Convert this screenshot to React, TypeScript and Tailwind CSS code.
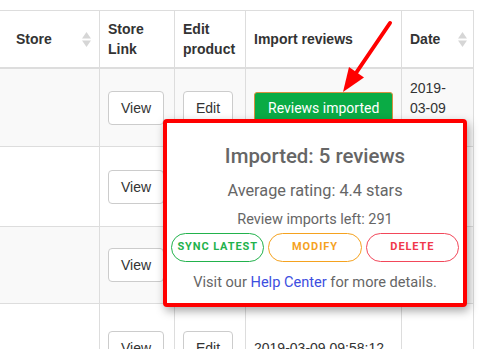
import React from "react";

const SortIcon = () => (
  <svg width="9" height="15" viewBox="0 0 9 15" className="shrink-0">
    <path d="M4.5 0 L9 6.5 L0 6.5 Z" fill="#d6d6d6" />
    <path d="M0 8.5 L9 8.5 L4.5 15 Z" fill="#d6d6d6" />
  </svg>
);

const TableButton = ({ label }: { label: string }) => (
  <div className="px-3 h-[34px] shrink-0 flex items-center rounded-[4px] border border-[#ccc] bg-white text-[14px] text-[#333]">
    {label}
  </div>
);

const Cell = ({
  children,
  className = "",
}: {
  children?: React.ReactNode;
  className?: string;
}) => (
  <div className={`flex items-center px-2 overflow-hidden ${className}`}>
    {children}
  </div>
);

const rows = [
  { h: "h-[77px]", bg: "bg-[#f9f9f9]", date: ["2019-", "03-09", "09:58:12"] },
  { h: "h-[79px]", bg: "bg-white", date: ["2019-", "03-09", "09:58:12"] },
  { h: "h-[76px]", bg: "bg-[#f9f9f9]", date: ["2019-", "03-09", "09:58:12"] },
];

const App = (): React.ReactElement => {
  return (
    <div
      className="relative w-[479px] h-[349px] overflow-hidden bg-white text-[#333]"
      style={{ fontFamily: '"Liberation Sans", Arial, sans-serif' }}
    >
      <div className="pt-[10px]">
        <div className="w-[474px] grid grid-cols-[7px_91px_74px_70px_155px_71px] gap-px bg-[#ddd] pt-px pr-px text-[14px] leading-[20px]">
          {/* header */}
          <Cell className="h-[57px] bg-white border-b border-[#ddd]" />
          <Cell className="h-[57px] bg-white border-b border-[#ddd] justify-between font-bold">
            <span>Store</span>
            <SortIcon />
          </Cell>
          <Cell className="h-[57px] bg-white border-b border-[#ddd] font-bold">
            <span>
              Store
              <br />
              Link
            </span>
          </Cell>
          <Cell className="h-[57px] bg-white border-b border-[#ddd] font-bold">
            <span>
              Edit
              <br />
              product
            </span>
          </Cell>
          <Cell className="h-[57px] bg-white border-b border-[#ddd] font-bold">
            <span>Import reviews</span>
          </Cell>
          <Cell className="h-[57px] bg-white border-b border-[#ddd] justify-between font-bold pr-[6px]">
            <span>Date</span>
            <SortIcon />
          </Cell>

          {rows.map((row, i) => (
            <React.Fragment key={i}>
              <Cell className={`${row.h} ${row.bg}`} />
              <Cell className={`${row.h} ${row.bg}`} />
              <Cell className={`${row.h} ${row.bg}`}>
                <TableButton label="View" />
              </Cell>
              <Cell className={`${row.h} ${row.bg}`}>
                <TableButton label="Edit" />
              </Cell>
              <Cell className={`${row.h} ${row.bg}`}>
                <div
                  className="px-[13px] h-[32px] shrink-0 whitespace-nowrap flex items-center rounded-[3px] border border-[#d9903f] bg-[#0aab45] text-white text-[14px]"
                  style={{ fontFamily: "Roboto, sans-serif" }}
                >
                  Reviews imported
                </div>
              </Cell>
              <Cell className={`${row.h} ${row.bg}`}>
                <span>
                  {row.date.map((d) => (
                    <React.Fragment key={d}>
                      {d}
                      <br />
                    </React.Fragment>
                  ))}
                </span>
              </Cell>
            </React.Fragment>
          ))}

          {/* last row */}
          <Cell className="h-[88px] bg-white" />
          <Cell className="h-[88px] bg-white" />
          <Cell className="h-[88px] bg-white">
            <TableButton label="View" />
          </Cell>
          <Cell className="h-[88px] bg-white">
            <TableButton label="Edit" />
          </Cell>
          <Cell className="h-[88px] bg-white whitespace-nowrap">
            <span>2019-03-09 09:58:12</span>
          </Cell>
          <Cell className="h-[88px] bg-white" />
        </div>
      </div>

      {/* red arrow annotation */}
      <svg
        className="absolute left-0 top-0 pointer-events-none"
        width="479"
        height="349"
        viewBox="0 0 479 349"
      >
        <line x1="390" y1="23" x2="356" y2="73" stroke="#ff0000" strokeWidth="4" strokeLinecap="round" />
        <path d="M343 92 L364 77.5 L349 67 Z" fill="#ff0000" />
      </svg>

      {/* popover */}
      <div
        className="absolute left-[163px] top-[119px] w-[304px] h-[188px] border-4 border-[#ff0000] rounded-[4px] bg-white shadow-[2px_4px_10px_rgba(0,0,0,0.35)] flex flex-col items-center pt-[21px] text-[#666]"
        style={{ fontFamily: "Roboto, sans-serif" }}
      >
        <div className="text-[20.4px] leading-[24px] font-medium">Imported: 5 reviews</div>
        <div className="mt-[13px] text-[16.3px] leading-[20px]">Average rating: 4.4 stars</div>
        <div className="mt-[9px] text-[14.5px] leading-[20px]">Review imports left: 291</div>
        <div className="mt-[3px] w-full px-[4px] grid grid-cols-3 gap-[4px]">
          <div className="h-[29px] flex items-center justify-center rounded-full border border-[#22b24c] text-[#22b24c] text-[11px] font-bold tracking-[0.9px]">
            SYNC LATEST
          </div>
          <div className="h-[29px] flex items-center justify-center rounded-full border border-[#f5a21f] text-[#f5a21f] text-[11px] font-bold tracking-[0.9px]">
            MODIFY
          </div>
          <div className="h-[29px] flex items-center justify-center rounded-full border border-[#f2475a] text-[#f0384b] text-[11px] font-bold tracking-[0.9px]">
            DELETE
          </div>
        </div>
        <div className="mt-[10px] text-[14.6px] leading-[20px]">
          Visit our <span className="text-[#3d4ee0]">Help Center</span> for more details.
        </div>
      </div>
    </div>
  );
};

export default App;
